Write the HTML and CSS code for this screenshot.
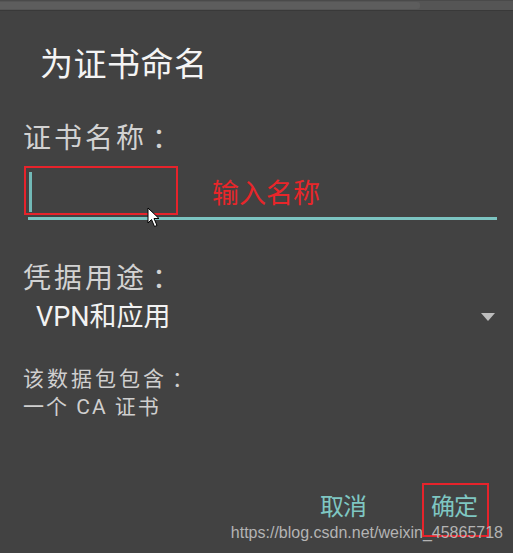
FILE: index.html
```html
<!DOCTYPE html>
<html lang="zh-CN">
<head>
<meta charset="utf-8">
<title>为证书命名</title>
<link rel="stylesheet" href="styles.css">
</head>
<body>
<div class="topbar"><div class="topbar-tab"></div></div>
<main class="dialog">
  <h1 class="title">为证书命名</h1>
  <div class="label">证书名称<span class="colon">：</span></div>
  <div class="field">
    <span class="caret"></span>
    <span class="mark-box mark-input"></span>
    <span class="note">输入名称</span>
    <svg class="pointer" width="13" height="21" viewBox="0 0 13 21"><path d="M1 1 L1 16 L4.5 12.5 L7.5 19.5 L10 18.5 L7 11.5 L12 11.5 Z" fill="#fff" stroke="#000" stroke-width="1"/></svg>
  </div>
  <div class="label label-usage">凭据用途<span class="colon">：</span></div>
  <div class="spinner">
    <span class="spinner-value">VPN和应用</span>
    <span class="spinner-arrow"></span>
  </div>
  <div class="info">
    <div class="info-line">该数据包包含<span class="colon">：</span></div>
    <div class="info-line info-line-2">一个 CA 证书</div>
  </div>
  <div class="actions">
    <button class="btn">取消</button>
    <button class="btn btn-ok">确定<span class="mark-box mark-ok"></span></button>
  </div>
  <div class="watermark">https://blog.csdn.net/weixin_45865718</div>
</main>
</body>
</html>
```
FILE: styles.css
```css
html, body {
  margin: 0;
  padding: 0;
  background: #424242;
  width: 513px;
  height: 553px;
  overflow: hidden;
  font-family: "Noto Sans CJK SC", sans-serif;
}

.topbar {
  height: 9px;
  background: #555555;
  border-top: 1px solid #4a4a4a;
  border-bottom: 1px solid #393939;
}

.topbar-tab {
  width: 420px;
  height: 7px;
  margin-top: 1px;
  background: #5d5d5d;
  border-radius: 0 3px 3px 0;
}

.dialog {
  position: relative;
  height: 542px;
  padding: 31px 16px 0 23px;
  box-sizing: border-box;
}

.title {
  margin: 0 0 0 17px;
  font-size: 33px;
  line-height: 40px;
  font-weight: 400;
  color: #f4f4f4;
  letter-spacing: 0.5px;
}

.label {
  margin-top: 37px;
  font-size: 28px;
  line-height: 34px;
  color: #d2d2d2;
  letter-spacing: 3px;
}

.colon {
  font-family: "Noto Sans CJK TC", sans-serif;
  margin-left: 5px;
}

.field {
  position: relative;
  margin: -2px 0 0 5px;
  padding: 21px 0 5px 1px;
  border-bottom: 3px solid #7cc4c1;
}

.caret {
  display: block;
  width: 3px;
  height: 40px;
  background: #72b9b7;
}

.mark-box {
  position: absolute;
  border: 2px solid #e7232b;
  box-sizing: border-box;
}

.mark-input {
  left: -4px;
  top: 15px;
  width: 154px;
  height: 49px;
}

.note {
  position: absolute;
  left: 184px;
  top: 24px;
  font-size: 27px;
  line-height: 34px;
  color: #e8262a;
}

.pointer {
  position: absolute;
  left: 119px;
  top: 56px;
}

.label-usage {
  margin-top: 39px;
}

.spinner {
  display: flex;
  align-items: center;
  justify-content: space-between;
  margin-top: 7px;
  padding: 0 18px 0 13px;
  margin-right: -16px;
}

.spinner-value {
  font-family: Roboto, "Noto Sans CJK SC", sans-serif;
  font-size: 27px;
  line-height: 34px;
  color: #f2f2f2;
}

.spinner-arrow {
  width: 0;
  height: 0;
  border-left: 7.5px solid transparent;
  border-right: 7.5px solid transparent;
  border-top: 8px solid #bdbdbd;
}

.info {
  margin-top: 28px;
  font-size: 21px;
  line-height: 30px;
  color: #cfcfcf;
}

.info-line {
  letter-spacing: 3px;
}

.info-line-2 {
  font-family: Roboto, "Noto Sans CJK SC", sans-serif;
  letter-spacing: 2px;
}

.actions {
  display: flex;
  justify-content: flex-end;
  gap: 65px;
  margin-top: 67px;
  margin-right: 20px;
}

.btn {
  position: relative;
  padding: 0;
  border: 0;
  background: none;
  font-family: "Noto Sans CJK SC", sans-serif;
  font-size: 24px;
  line-height: 32px;
  color: #7fc7c2;
  letter-spacing: -1px;
}

.mark-ok {
  left: -9px;
  top: -6px;
  width: 67px;
  height: 54px;
}

.watermark {
  position: absolute;
  right: 10px;
  bottom: 11px;
  font-family: "Liberation Sans", Arial, sans-serif;
  font-size: 16px;
  line-height: 18px;
  color: #b4b4b4;
}
```
